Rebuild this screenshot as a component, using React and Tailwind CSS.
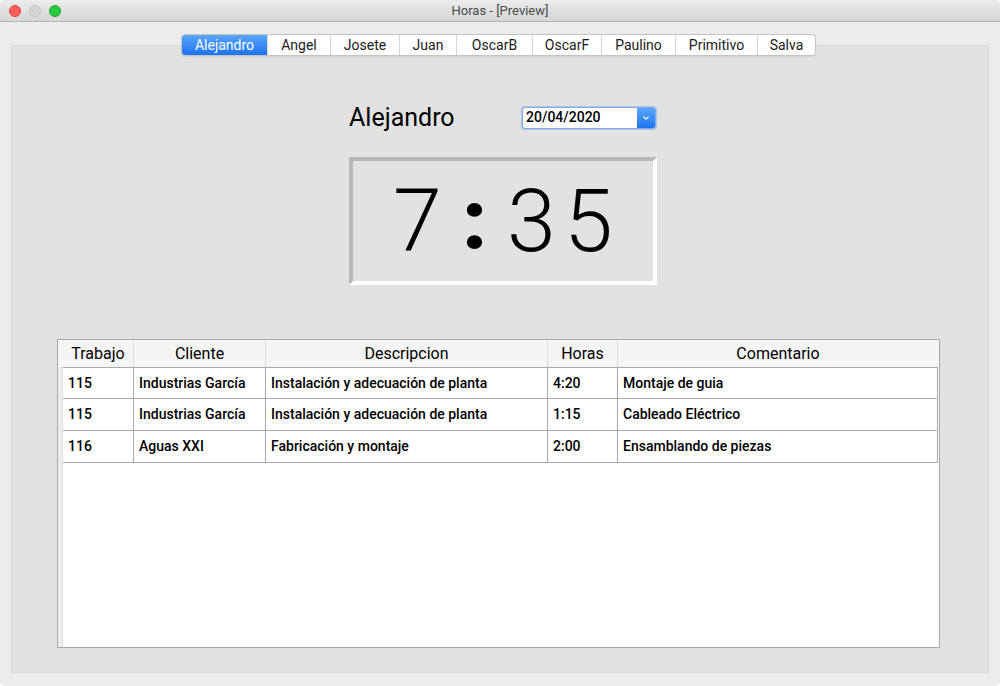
import React from "react";

const tabs = [
  { name: "Alejandro", w: "w-[85px]" },
  { name: "Angel", w: "w-[63px]" },
  { name: "Josete", w: "w-[69px]" },
  { name: "Juan", w: "w-[57px]" },
  { name: "OscarB", w: "w-[76px]" },
  { name: "OscarF", w: "w-[69px]" },
  { name: "Paulino", w: "w-[74px]" },
  { name: "Primitivo", w: "w-[82px]" },
  { name: "Salva", w: "w-[58px]" },
];

const rows = [
  ["115", "Industrias García", "Instalación y adecuación de planta", "4:20", "Montaje de guia"],
  ["115", "Industrias García", "Instalación y adecuación de planta", "1:15", "Cableado Eléctrico"],
  ["116", "Aguas XXI", "Fabricación y montaje", "2:00", "Ensamblando de piezas"],
];

const cols = "grid grid-cols-[71px_132px_282px_70px_320px]";

function TitleBar() {
  return (
    <div className="relative flex h-[22px] items-center justify-center border-b border-[#b5b5b5] bg-gradient-to-b from-[#ececec] to-[#d6d6d6]">
      <div className="absolute left-[9px] top-[5px] flex gap-[8px]">
        <div className="h-[12px] w-[12px] rounded-full bg-[#fe5f57] border border-[#e0443e]" />
        <div className="h-[12px] w-[12px] rounded-full bg-[#d4d4d4] border border-[#c2c2c2]" />
        <div className="h-[12px] w-[12px] rounded-full bg-[#28c840] border border-[#1aab29]" />
      </div>
      <div className="text-[13px] text-[#4a4a4a]">Horas - [Preview]</div>
    </div>
  );
}

function Tabs() {
  return (
    <div className="relative z-10 flex justify-center pt-[12px]">
      <div className="-ml-[3px] flex h-[22px] overflow-hidden rounded-[4px] border border-[#c4c4c4] bg-white shadow-[0_1px_1px_rgba(0,0,0,0.08)]">
        {tabs.map((t, i) =>
          i === 0 ? (
            <div
              key={t.name}
              className={`${t.w} flex items-center justify-center bg-gradient-to-b from-[#5aa5fb] to-[#1b73f1] text-[14px] text-white`}
            >
              {t.name}
            </div>
          ) : (
            <div
              key={t.name}
              className={`${t.w} flex items-center justify-center border-l border-[#d6d6d6] text-[14px] text-[#1a1a1a]`}
            >
              {t.name}
            </div>
          )
        )}
      </div>
    </div>
  );
}

function DateBox() {
  return (
    <div className="mr-[1px] flex h-[22px] w-[134px] rounded-[3px] border border-[#7ea9ea] bg-white shadow-[0_0_0_1px_rgba(120,165,235,0.5)]">
      <div className="flex flex-1 items-center pl-[3px] text-[14px] font-medium text-black">20/04/2020</div>
      <div className="flex w-[18px] items-center justify-center rounded-r-[2px] bg-gradient-to-b from-[#5ba6fb] to-[#1d74f1]">
        <svg width="8" height="6" viewBox="0 0 8 6">
          <path d="M1.5 1.8 L4 4.2 L6.5 1.8" stroke="white" strokeWidth="1.2" fill="none" />
        </svg>
      </div>
    </div>
  );
}

function Clock() {
  return (
    <div className="mt-[27px] flex h-[128px] w-[308px] items-center justify-center border-[4px] border-t-[#b7b7b7] border-l-[#b7b7b7] border-b-white border-r-white bg-[#e2e2e2]">
      <div className="flex h-[90px] items-center leading-none text-black">
        <span className="w-[57px] text-center font-['Roboto',sans-serif] text-[88px] font-light">7</span>
        <span className="w-[57px] text-center font-['Roboto',sans-serif] text-[84px] font-black">:</span>
        <span className="w-[57px] text-center font-['Roboto',sans-serif] text-[88px] font-light">3</span>
        <span className="w-[57px] text-center font-['Roboto',sans-serif] text-[88px] font-light">5</span>
      </div>
    </div>
  );
}

function Table() {
  return (
    <div className="ml-[45px] mr-[48px] mt-[54px] flex h-[309px] flex-col border border-[#a8a8a8] bg-white">
      <div className="flex h-[27px] bg-[#f5f5f5]">
        <div className="w-[5px] bg-[#f5f5f5]" />
        <div className={`${cols} text-[16px] text-black`}>
          {["Trabajo", "Cliente", "Descripcion", "Horas", "Comentario"].map((h, i) => (
            <div
              key={h}
              className={`flex h-[27px] items-center justify-center ${i < 4 ? "border-r border-[#dcdcdc]" : ""}`}
            >
              {h}
            </div>
          ))}
        </div>
      </div>
      <div className="flex flex-1">
        <div className="w-[5px] border-r border-[#e4e4e4] bg-[#ececec]" />
        <div className="flex flex-col">
          {rows.map((r, ri) => (
            <div key={ri} className={`${cols} text-[14px] font-medium text-black`}>
              {r.map((c, ci) => (
                <div
                  key={ci}
                  className={`flex h-[32px] items-center border-b border-r border-[#a9a9a9] pl-[5px] ${ri === 0 ? "border-t" : ""}`}
                >
                  {c}
                </div>
              ))}
            </div>
          ))}
        </div>
      </div>
    </div>
  );
}

export default function App() {
  return (
    <div className="h-[686px] w-[1000px] overflow-hidden rounded-[5px] bg-[#ececec] font-['Roboto','Liberation_Sans',sans-serif]">
      <TitleBar />
      <div className="px-[11px]">
        <Tabs />
        <div className="-mt-[11px] h-[628px] border border-[#d9d9d9] bg-[#e2e2e2] pt-[59px]">
          <div className="ml-[6px] flex flex-col items-center">
            <div className="flex w-[308px] items-center justify-between">
              <div className="text-[25px] leading-none text-black">Alejandro</div>
              <DateBox />
            </div>
            <Clock />
          </div>
          <Table />
        </div>
      </div>
    </div>
  );
}
